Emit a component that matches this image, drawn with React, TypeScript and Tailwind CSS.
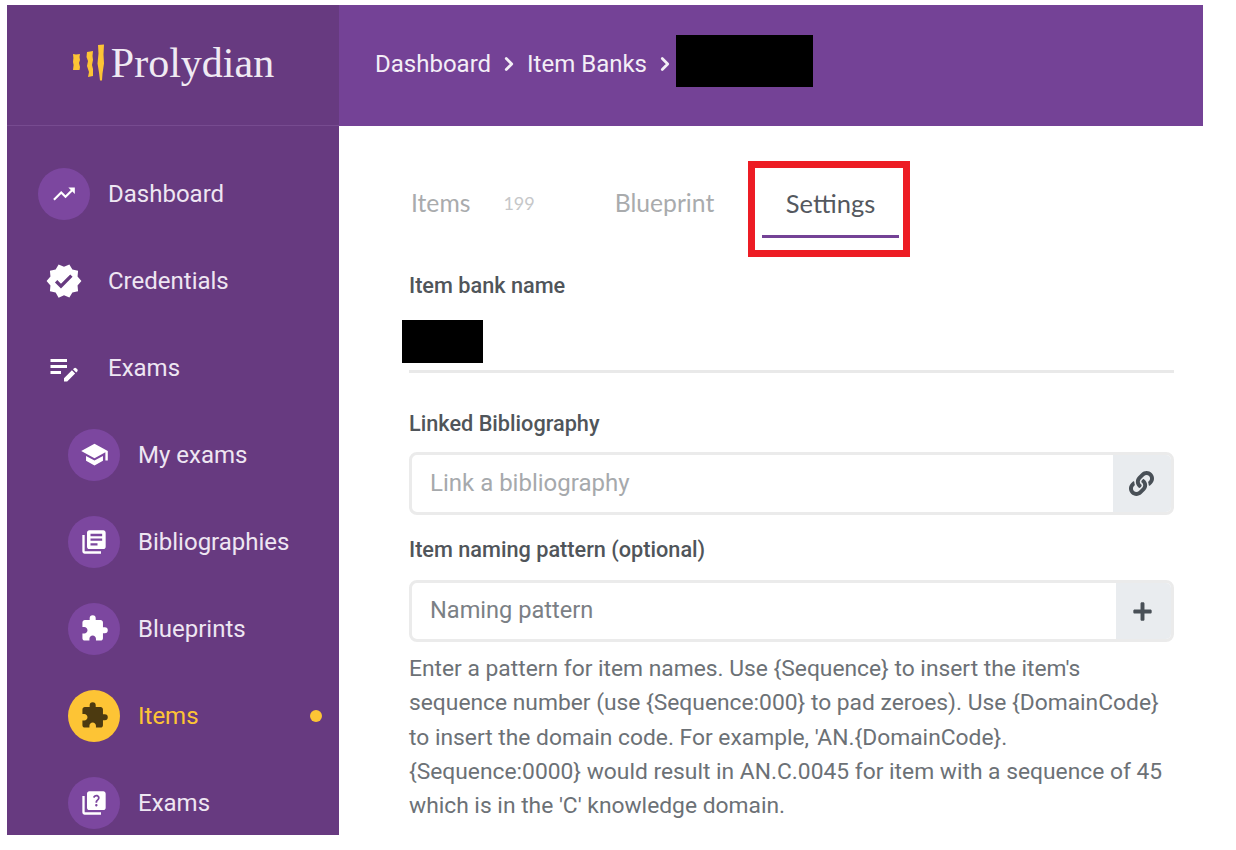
import React from 'react';
import { ChevronRight } from 'lucide-react';
import { FaLink, FaPlus } from 'react-icons/fa';
import { MdEditNote, MdExtension, MdLibraryBooks, MdQuiz, MdSchool, MdTrendingUp, MdVerified } from 'react-icons/md';

const Logo = () => (
  <svg width="34" height="38" viewBox="0 0 34 38" fill="#fdc435">
    <path d="M1 10l3 .5 4-.5-.5 3 .5 3-1 3 1 4-.5 3H1l.6-5-.6-3 .4-4z" />
    <path d="M15 8l6-1-.5 5 .5 4-1 5 1 4v7l-5 1 1-5-2-6 1-5-1.500-4z" />
    <path d="M26 1l6-.5-.5 10 .5 9-1.500 10-.5 7h-2l-1-8-1.500-9 1-10z" />
  </svg>
);

const NavItem = ({ label, icon, sub, active, round = true }: { label: string; icon: React.ReactNode; sub?: boolean; active?: boolean; round?: boolean }) => (
  <div className={`flex h-[87px] items-center ${sub ? 'pl-[61px]' : 'pl-[31px]'}`}>
    <div className={`flex h-[52px] w-[52px] shrink-0 items-center justify-center rounded-full ${active ? 'bg-[#fdc435] text-[#4c3a10]' : round ? 'bg-[#7c479f] text-white' : 'text-white'}`}>
      {icon}
    </div>
    <span className={`ml-[18px] text-[24px] ${active ? 'text-[#fdc435]' : 'text-[#eee6f2]'}`}>{label}</span>
    {active && <span className="ml-auto mr-[17px] h-[12px] w-[12px] rounded-full bg-[#fdc435]" />}
  </div>
);

const App = () => {
  return (
    <div className="h-[850px] w-[1236px] overflow-hidden bg-white pl-[7px] pt-[5px] font-['Roboto',sans-serif]">
      <div className="flex h-[830px] w-[1196px]">
        <aside className="w-[332px] shrink-0 bg-[#673a80]">
          <div className="flex h-[121px] items-center justify-center gap-[5px] border-b border-[#774b90] pb-[4px]">
            <Logo />
            <span className="font-['Liberation_Serif',serif] text-[42px] leading-none text-[#f0eaf3]">Prolydian</span>
          </div>
          <nav className="pt-[24px]">
            <NavItem label="Dashboard" icon={<MdTrendingUp size={26} />} />
            <NavItem label="Credentials" round={false} icon={<MdVerified size={38} />} />
            <NavItem label="Exams" round={false} icon={<MdEditNote size={36} />} />
            <NavItem label="My exams" sub icon={<MdSchool size={29} />} />
            <NavItem label="Bibliographies" sub icon={<MdLibraryBooks size={28} />} />
            <NavItem label="Blueprints" sub icon={<MdExtension size={29} />} />
            <NavItem label="Items" sub active icon={<MdExtension size={29} />} />
            <NavItem label="Exams" sub icon={<MdQuiz size={28} />} />
          </nav>
        </aside>

        <div className="min-w-0 flex-1">
          <header className="flex h-[121px] items-center bg-[#744296] pb-[3px] pl-[36px] text-[24px] text-[#f3eef6]">
            <span>Dashboard</span>
            <ChevronRight size={22} strokeWidth={3} className="mx-[7px]" />
            <span>Item Banks</span>
            <ChevronRight size={22} strokeWidth={3} className="ml-[7px]" />
            <div className="mb-[6px] h-[52px] w-[137px] bg-black" />
          </header>

          <main className="pl-[70px] pr-[29px]">
            <div className="flex items-start pt-[35px] font-['Lato',sans-serif] text-[24.7px]">
              <div className="flex h-[96px] w-[339px] items-center pb-[12px] pl-[2px] text-[#a9abad]">
                <span>Items</span>
                <span className="ml-[33px] text-[18px] text-[#c6c7c9]">199</span>
                <span className="ml-[80px]">Blueprint</span>
              </div>
              <div className="h-[96px] w-[162px] border-[7px] border-[#ed1c24] pl-[7px] pr-[4px] pt-[16px] text-center text-[#54585e]">
                <div className="h-[54px] border-b-[3px] border-[#744296] text-[25.5px]">Settings</div>
              </div>
            </div>

            <label className="mt-[16px] block text-[21.7px] font-medium leading-[26px] text-[#50555a]">Item bank name</label>
            <div className="mt-[21px] h-[43px] w-[81px] -ml-[7px] bg-black" />
            <div className="mt-[7px] h-[3px] bg-[#e9e9e9]" />

            <label className="mt-[38px] block text-[21.7px] font-medium leading-[26px] text-[#50555a]">Linked Bibliography</label>
            <div className="mt-[15px] flex h-[63px] overflow-hidden rounded-[8px] border-[3px] border-[#ebebeb]">
              <div className="flex flex-1 items-center pb-[1px] pl-[18px] text-[24px] text-[#a6a9ac]">Link a bibliography</div>
              <div className="flex w-[58px] items-center justify-center bg-[#e9ecef] pr-[2px] text-[#495057]"><FaLink size={25} /></div>
            </div>

            <label className="mt-[22px] block text-[21.7px] font-medium leading-[26px] text-[#50555a]">Item naming pattern (optional)</label>
            <div className="mt-[17px] flex h-[62px] overflow-hidden rounded-[8px] border-[3px] border-[#ebebeb]">
              <div className="flex flex-1 items-center pl-[18px] text-[23.6px] text-[#7b8085]">Naming pattern</div>
              <div className="flex w-[55px] items-center justify-center bg-[#e9ecef] pr-[2px] text-[#495057]"><FaPlus size={21} /></div>
            </div>

            <p className="mt-[10px] whitespace-nowrap text-[22.8px] leading-[34.25px] text-[#6c7176]">
              Enter a pattern for item names. Use {'{Sequence}'} to insert the item's<br />
              sequence number (use {'{Sequence:000}'} to pad zeroes). Use {'{DomainCode}'}<br />
              to insert the domain code. For example, 'AN.{'{DomainCode}'}.<br />
              {'{Sequence:0000}'} would result in AN.C.0045 for item with a sequence of 45<br />
              which is in the 'C' knowledge domain.
            </p>
          </main>
        </div>
      </div>
    </div>
  );
};

export default App;
